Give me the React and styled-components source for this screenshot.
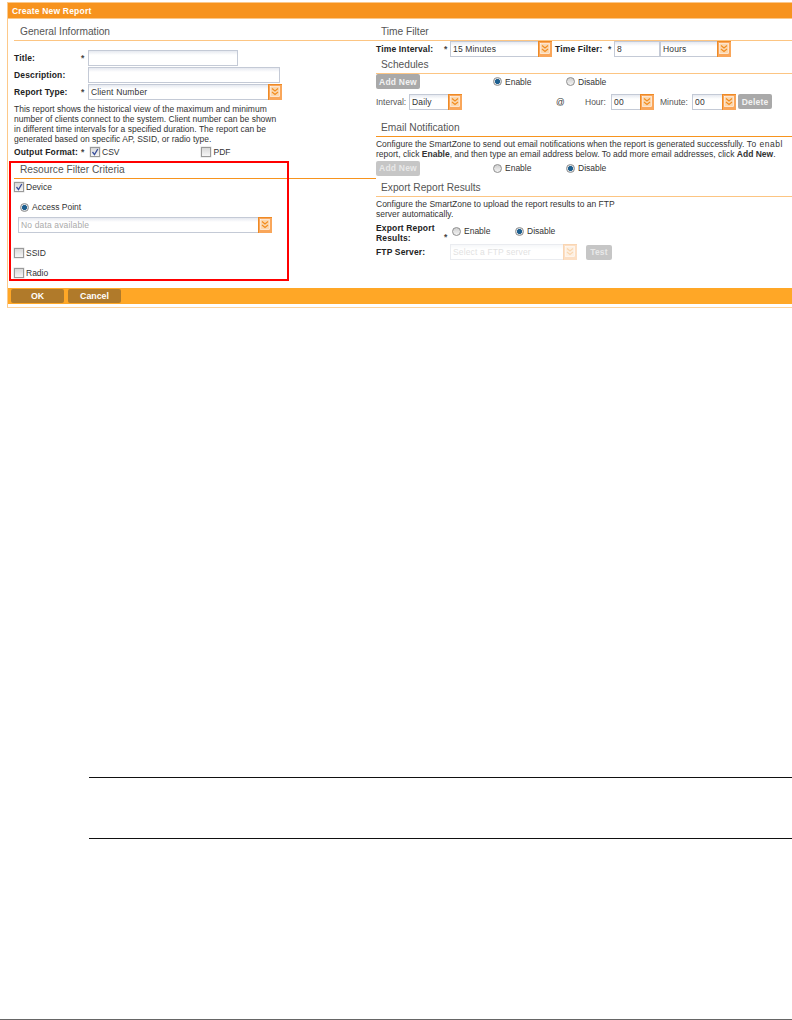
import styled, { createGlobalStyle } from "styled-components";

const GlobalStyle = createGlobalStyle`
  html, body {
    margin: 0;
    padding: 0;
    background: #fff;
    overflow: hidden;
  }
  * {
    box-sizing: border-box;
  }
`;

const Page = styled.div`
  position: relative;
  width: 792px;
  height: 1020px;
  padding-top: 2px;
  display: flex;
  flex-direction: column;
  overflow: hidden;
  font-family: "Liberation Sans", Arial, sans-serif;
  font-size: 8.5px;
  color: #222;
`;

const Panel = styled.div`
  width: 900px;
  height: 306px;
  margin-left: 7px;
  padding-bottom: 3px;
  border-left: 1px solid #fdc98a;
  border-bottom: 1px solid #fdd39c;
  display: flex;
  flex-direction: column;
  flex: none;
`;

const TitleBar = styled.div`
  height: 17px;
  padding-left: 4px;
  display: flex;
  align-items: center;
  background: #f7931e;
  border-top: 1px solid #fbc88a;
  border-bottom: 1px solid #fbc88a;
  color: #fff;
  font-weight: bold;
  font-size: 8.5px;
  letter-spacing: 0.2px;
`;

const Columns = styled.div`
  height: 269px;
  display: grid;
  grid-template-columns: 368px 1fr;
`;

const LeftColumn = styled.div`
  padding-left: 6px;
  display: flex;
  flex-direction: column;
`;

const RightColumn = styled.div`
  display: flex;
  flex-direction: column;
`;

const SectionHead = styled.div`
  height: ${(p) => p.$height}px;
  padding: 0 0 2px ${(p) => p.$indent || 6}px;
  display: flex;
  align-items: flex-end;
  flex: none;
  border-bottom: 1px solid ${(p) => (p.$strong ? "#f7941e" : "#fcc583")};
  color: #555;
  font-size: 10.2px;
  line-height: 12px;
`;

const Row = styled.div`
  height: ${(p) => p.$height}px;
  margin-top: ${(p) => p.$top || 0}px;
  display: flex;
  align-items: center;
  flex: none;
`;

const ExportRow = styled(Row)`
  align-items: flex-start;
`;

const Label = styled.span`
  width: ${(p) => p.$width}px;
  margin-left: ${(p) => p.$left || 0}px;
  flex: none;
  font-weight: bold;
  line-height: 10px;
  letter-spacing: 0.15px;
`;

const PlainLabel = styled.span`
  width: ${(p) => p.$width}px;
  margin-left: ${(p) => p.$left || 0}px;
  flex: none;
  color: ${(p) => (p.$dark ? "#333" : "#555")};
`;

const Star = styled.span`
  width: ${(p) => p.$width || 7}px;
  margin-top: ${(p) => p.$top || 0}px;
  flex: none;
  font-weight: bold;
  color: #444;
`;

const Input = styled.div`
  width: ${(p) => p.$width}px;
  height: 16px;
  padding-left: 2px;
  flex: none;
  display: flex;
  align-items: center;
  background: linear-gradient(#e6e9f0, #fff 4px);
  border: 1px solid ${(p) => (p.$disabled ? "#e8ebf0" : "#c4cad6")};
  color: ${(p) => (p.$disabled ? "#c8c8c8" : "#333")};
  letter-spacing: 0.15px;
  white-space: nowrap;
  overflow: hidden;
`;

const Select = styled.div`
  width: ${(p) => p.$width}px;
  flex: none;
  display: flex;
  opacity: ${(p) => (p.$disabled ? 0.35 : 1)};
`;

const SelectValue = styled(Input)`
  flex: 1;
  width: auto;
  border-right: 0;
  color: ${(p) => (p.$muted ? "#aaa" : "#333")};
`;

const ArrowBox = styled.svg`
  width: 14px;
  height: 16px;
  flex: none;
  display: block;
`;

const Arrow = () => (
  <ArrowBox viewBox="0 0 14 16">
    <rect width="14" height="16" fill="#f9a65a" />
    <rect x="0" y="0" width="1" height="16" fill="#ee8a25" />
    <rect x="0" y="0" width="14" height="1" fill="#ee8a25" />
    <rect x="2.5" y="2.5" width="9" height="10" fill="#fbd7ae" stroke="#fff" strokeWidth="0.6" />
    <path d="M4 4.5l3 2.5 3-2.5M4 8l3 2.5L10 8" fill="none" stroke="#f28c1e" strokeWidth="1.1" />
  </ArrowBox>
);

const Dropdown = ({ width, value, muted, disabled }) => (
  <Select $width={width} $disabled={disabled}>
    <SelectValue $muted={muted}>{value}</SelectValue>
    <Arrow />
  </Select>
);

const CheckBox = styled.span`
  width: 10px;
  height: 10px;
  flex: none;
  display: flex;
  align-items: center;
  justify-content: center;
  background: linear-gradient(#d8d8d8, #f6f6f6);
  border: 1px solid #9a9a9a;
  box-shadow: 0 0 0 0.5px #ddd;
`;

const CheckMark = styled.svg`
  width: 8px;
  height: 8px;
  display: block;
`;

const Check = ({ checked }) => (
  <CheckBox>
    {checked && (
      <CheckMark viewBox="0 0 8 8">
        <path d="M1.5 4l2 2.6L6.8 1" fill="none" stroke="#3a4f9c" strokeWidth="1.3" />
      </CheckMark>
    )}
  </CheckBox>
);

const RadioDot = styled.span`
  width: 9px;
  height: 9px;
  flex: none;
  border-radius: 50%;
  border: 1px solid #8f8f8f;
  background: ${(p) =>
    p.$on
      ? "radial-gradient(circle, #1d5f8f 0 2.2px, #d8dde2 2.8px)"
      : "linear-gradient(#cfcfcf, #f4f4f4)"};
`;

const Option = styled.span`
  width: ${(p) => (p.$width ? `${p.$width}px` : "auto")};
  margin-left: ${(p) => p.$left || 0}px;
  margin-top: ${(p) => p.$top || 0}px;
  display: flex;
  align-items: center;
  gap: ${(p) => p.$gap || 3}px;
  flex: none;
  color: #333;
`;

const Button = styled.span`
  width: ${(p) => p.$width}px;
  height: 15px;
  margin-left: ${(p) => p.$left || 0}px;
  flex: none;
  display: flex;
  align-items: center;
  justify-content: center;
  border-radius: 2px;
  background: #a9a9a9;
  opacity: ${(p) => (p.$disabled ? 0.65 : 1)};
  color: ${(p) => (p.$disabled ? "#ddd" : "#f2f2f2")};
  font-weight: bold;
  letter-spacing: 0.2px;
`;

const Paragraph = styled.p`
  width: ${(p) => p.$width}px;
  margin: ${(p) => p.$top || 0}px 0 0;
  flex: none;
  line-height: 10px;
  color: #333;
  white-space: nowrap;
`;

// the last words of this line run off the edge of the page
const TightLine = styled.span`
  letter-spacing: -0.02px;
`;

const WideWords = styled.span`
  letter-spacing: 0.5px;
`;

const Footer = styled.div`
  height: 16px;
  padding-left: 3px;
  flex: none;
  display: flex;
  align-items: center;
  gap: 4px;
  background: #ffa726;
`;

const FooterButton = styled.span`
  width: 53px;
  height: 14px;
  display: flex;
  align-items: center;
  justify-content: center;
  border-radius: 2px;
  background: #b07a2a;
  color: #fff;
  font-weight: bold;
  font-size: 8.8px;
`;

// annotation drawn over the screenshot
const Highlight = styled.div`
  position: absolute;
  left: 9px;
  top: 161px;
  width: 280px;
  height: 120px;
  border: 2px solid #f00;
`;

const NoteRule = styled.div`
  height: 1px;
  margin: ${(p) => p.$top}px 0 0 89px;
  flex: none;
  background: #111;
`;

const PageRule = styled.div`
  height: 1px;
  margin-top: auto;
  flex: none;
  background: #666;
`;

export default function App() {
  return (
    <Page>
      <GlobalStyle />
      <Panel>
        <TitleBar>Create New Report</TitleBar>
        <Columns>
          <LeftColumn>
            <SectionHead $height={22}>General Information</SectionHead>
            <Row $height={16} $top={9}>
              <Label $width={67}>Title:</Label>
              <Star>*</Star>
              <Input $width={150} />
            </Row>
            <Row $height={16} $top={1}>
              <Label $width={74}>Description:</Label>
              <Input $width={192} />
            </Row>
            <Row $height={16} $top={1}>
              <Label $width={67}>Report Type:</Label>
              <Star>*</Star>
              <Dropdown width={194} value="Client Number" />
            </Row>
            <Paragraph $width={280} $top={4}>
              This report shows the historical view of the maximum and minimum
              <br />
              number of clients connect to the system. Client number can be shown
              <br />
              in different time intervals for a specified duration. The report can be
              <br />
              generated based on specific AP, SSID, or radio type.
            </Paragraph>
            <Row $height={16}>
              <Label $width={67}>Output Format:</Label>
              <Star $width={9}>*</Star>
              <Option $gap={2}>
                <Check checked />
                CSV
              </Option>
              <Option $left={82} $gap={2}>
                <Check />
                PDF
              </Option>
            </Row>
            <SectionHead $height={19} $strong>Resource Filter Criteria</SectionHead>
            <Row $height={16}>
              <Option $gap={2}>
                <Check checked />
                Device
              </Option>
            </Row>
            <Row $height={16} $top={4}>
              <Option $left={6} $gap={3}>
                <RadioDot $on />
                Access Point
              </Option>
            </Row>
            <Row $height={16} $top={2}>
              <Option $left={4}>
                <Dropdown width={254} value="No data available" muted />
              </Option>
            </Row>
            <Row $height={16} $top={12}>
              <Option $gap={2}>
                <Check />
                SSID
              </Option>
            </Row>
            <Row $height={16} $top={4}>
              <Option $gap={2}>
                <Check />
                Radio
              </Option>
            </Row>
          </LeftColumn>

          <RightColumn>
            <SectionHead $height={22} $indent={5}>Time Filter</SectionHead>
            <Row $height={16}>
              <Label $width={68}>Time Interval:</Label>
              <Star $width={6}>*</Star>
              <Dropdown width={102} value="15 Minutes" />
              <Label $width={53} $left={3}>Time Filter:</Label>
              <Star $width={6}>*</Star>
              <Input $width={46}>8</Input>
              <Dropdown width={71} value="Hours" />
            </Row>
            <SectionHead $height={17} $indent={5}>Schedules</SectionHead>
            <Row $height={15}>
              <Button $width={44}>Add New</Button>
              <Option $left={73} $width={73}>
                <RadioDot $on />
                Enable
              </Option>
              <Option>
                <RadioDot />
                Disable
              </Option>
            </Row>
            <Row $height={25}>
              <PlainLabel $width={33}>Interval:</PlainLabel>
              <Dropdown width={53} value="Daily" />
              <PlainLabel $width={29} $left={94} $dark>@</PlainLabel>
              <PlainLabel $width={26}>Hour:</PlainLabel>
              <Dropdown width={43} value="00" />
              <PlainLabel $width={32} $left={6}>Minute:</PlainLabel>
              <Dropdown width={44} value="00" />
              <Button $width={34} $left={2}>Delete</Button>
            </Row>
            <SectionHead $height={23} $indent={5} $strong>Email Notification</SectionHead>
            <Paragraph $width={420} $top={2}>
              <TightLine>
                Configure the SmartZone to send out email notifications when the report is generated successfully.{" "}
              </TightLine>
              <WideWords>To enabl</WideWords>
              <br />
              report, click <b>Enable</b>, and then type an email address below. To add more email addresses, click <b>Add New</b>.
            </Paragraph>
            <Row $height={16} $top={1}>
              <Button $width={44} $disabled>Add New</Button>
              <Option $left={73} $width={73}>
                <RadioDot />
                Enable
              </Option>
              <Option>
                <RadioDot $on />
                Disable
              </Option>
            </Row>
            <SectionHead $height={21} $indent={5}>Export Report Results</SectionHead>
            <Paragraph $width={300} $top={2}>
              Configure the SmartZone to upload the report results to an FTP
              <br />
              server automatically.
            </Paragraph>
            <ExportRow $height={21} $top={4}>
              <Label $width={68}>Export Report Results:</Label>
              <Star $width={8} $top={9}>*</Star>
              <Option $width={63} $top={3}>
                <RadioDot />
                Enable
              </Option>
              <Option $top={3}>
                <RadioDot $on />
                Disable
              </Option>
            </ExportRow>
            <Row $height={16}>
              <Label $width={74}>FTP Server:</Label>
              <Dropdown width={127} value="Select a FTP server" muted disabled />
              <Button $width={26} $left={9} $disabled>Test</Button>
            </Row>
          </RightColumn>
        </Columns>
        <Footer>
          <FooterButton>OK</FooterButton>
          <FooterButton>Cancel</FooterButton>
        </Footer>
      </Panel>
      <NoteRule $top={469} />
      <NoteRule $top={60} />
      <PageRule />
      <Highlight />
    </Page>
  );
}
